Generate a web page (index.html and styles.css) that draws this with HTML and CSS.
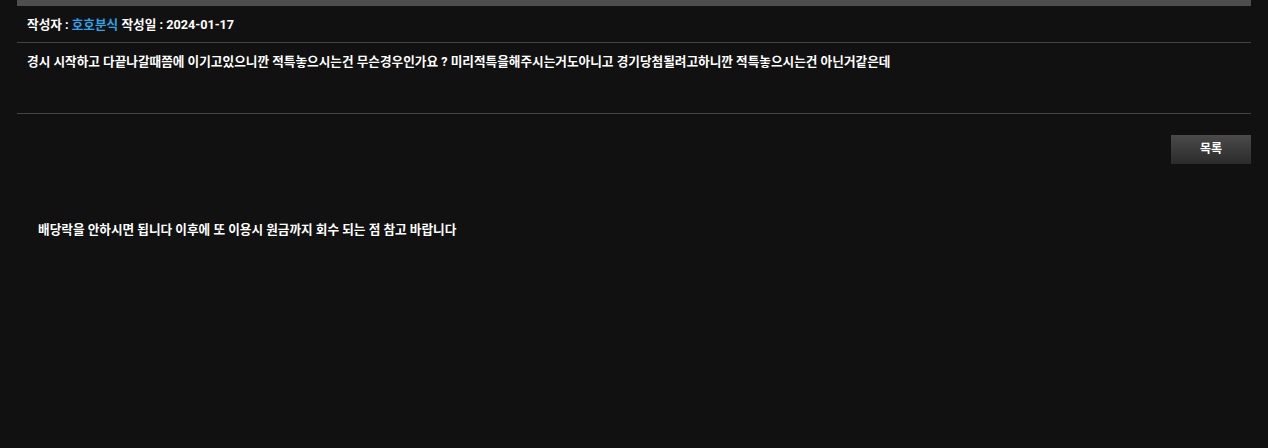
FILE: index.html
```html
<!DOCTYPE html>
<html lang="ko">
<head>
<meta charset="utf-8">
<link rel="stylesheet" href="styles.css">
</head>
<body>
<div class="wrap">
  <div class="topbar"></div>
  <div class="info">작성자 : <span class="author">호호분식</span> 작성일 : 2024-01-17</div>
  <div class="content">경시 시작하고 다끝나갈때쯤에 이기고있으니깐 적특놓으시는건 무슨경우인가요 ? 미리적특을해주시는거도아니고 경기당첨될려고하니깐 적특놓으시는건 아닌거같은데</div>
  <div class="actions"><a class="btn">목록</a></div>
  <div class="reply">배당락을 안하시면 됩니다 이후에 또 이용시 원금까지 회수 되는 점 참고 바랍니다</div>
</div>
</body>
</html>
```
FILE: styles.css
```css
html, body { margin: 0; padding: 0; background: #111111; }
body {
  font-family: Roboto, "Noto Sans CJK KR", sans-serif;
  font-size: 12.65px;
  font-weight: bold;
  color: #ffffff;
}
.wrap { margin: 0 17px; }
.topbar { height: 6px; background: #4d4d4d; }
.info {
  height: 36px;
  line-height: 38px;
  padding: 0 10px;
  border-bottom: 1px solid #444;
}
.author { color: #2fa3e8; }
.content {
  height: 59px;
  padding: 11px 10px 0;
  line-height: 16px;
  border-bottom: 1px solid #444;
}
.actions {
  display: flex;
  justify-content: flex-end;
  padding-top: 21px;
}
.btn {
  display: block;
  width: 80px;
  height: 29px;
  line-height: 29px;
  font-size: 12px;
  text-align: center;
  background: linear-gradient(#4a4a4a, #2b2b2b);
  color: #fff;
}
.reply {
  padding: 58px 21px 0;
  line-height: 16px;
}
```
